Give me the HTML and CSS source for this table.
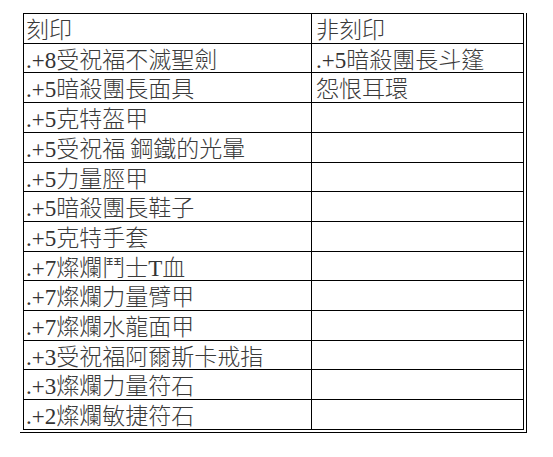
FILE: index.html
```html
<!DOCTYPE html>
<html lang="zh-Hant">
<head>
<meta charset="utf-8">
<title>刻印</title>
<link rel="stylesheet" href="styles.css">
</head>
<body>
<div class="frame">
  <div class="grid">
    <div class="cell left">刻印</div><div class="cell right">非刻印</div>
    <div class="cell left"><span class="num">.+8</span>受祝福不滅聖劍</div><div class="cell right"><span class="num">.+5</span>暗殺團長斗篷</div>
    <div class="cell left"><span class="num">.+5</span>暗殺團長面具</div><div class="cell right">怨恨耳環</div>
    <div class="cell left"><span class="num">.+5</span>克特盔甲</div><div class="cell right"></div>
    <div class="cell left"><span class="num">.+5</span>受祝福 鋼鐵的光暈</div><div class="cell right"></div>
    <div class="cell left"><span class="num">.+5</span>力量脛甲</div><div class="cell right"></div>
    <div class="cell left"><span class="num">.+5</span>暗殺團長鞋子</div><div class="cell right"></div>
    <div class="cell left"><span class="num">.+5</span>克特手套</div><div class="cell right"></div>
    <div class="cell left"><span class="num">.+7</span>燦爛鬥士<span class="num">T</span>血</div><div class="cell right"></div>
    <div class="cell left"><span class="num">.+7</span>燦爛力量臂甲</div><div class="cell right"></div>
    <div class="cell left"><span class="num">.+7</span>燦爛水龍面甲</div><div class="cell right"></div>
    <div class="cell left"><span class="num">.+3</span>受祝福阿爾斯卡戒指</div><div class="cell right"></div>
    <div class="cell left"><span class="num">.+3</span>燦爛力量符石</div><div class="cell right"></div>
    <div class="cell left"><span class="num">.+2</span>燦爛敏捷符石</div><div class="cell right"></div>
  </div>
</div>
</body>
</html>
```

FILE: styles.css
```css
html, body {
  margin: 0;
  padding: 0;
  background: #ffffff;
}

.frame {
  display: inline-block;
  margin: 13px 0 0 20px;
  padding: 0 2px 2px 3px;
  border-right: 1px solid #000;
  border-bottom: 1px solid #000;
}

.grid {
  display: grid;
  grid-template-columns: 288px 212px;
  grid-template-rows: repeat(14, 29.71px);
  border-top: 1px solid #000;
  border-left: 1px solid #000;
}

.cell {
  border-right: 1px solid #000;
  border-bottom: 1px solid #000;
  font-family: "Noto Sans CJK TC", "Liberation Serif", serif;
  font-size: 23px;
  font-weight: 300;
  line-height: 28px;
  color: #3a3a3a;
  white-space: nowrap;
}

.num {
  font-family: "Liberation Serif", serif;
  font-weight: 400;
  color: #333;
}

.left {
  padding-left: 2px;
}

.right {
  padding-left: 4px;
}
```
